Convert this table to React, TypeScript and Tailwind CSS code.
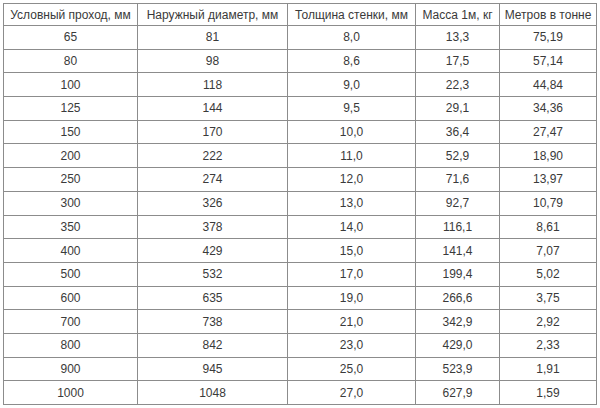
const headers = [
  "Условный проход, мм",
  "Наружный диаметр, мм",
  "Толщина стенки, мм",
  "Масса 1м, кг",
  "Метров в тонне",
];

const rows = [
  ["65", "81", "8,0", "13,3", "75,19"],
  ["80", "98", "8,6", "17,5", "57,14"],
  ["100", "118", "9,0", "22,3", "44,84"],
  ["125", "144", "9,5", "29,1", "34,36"],
  ["150", "170", "10,0", "36,4", "27,47"],
  ["200", "222", "11,0", "52,9", "18,90"],
  ["250", "274", "12,0", "71,6", "13,97"],
  ["300", "326", "13,0", "92,7", "10,79"],
  ["350", "378", "14,0", "116,1", "8,61"],
  ["400", "429", "15,0", "141,4", "7,07"],
  ["500", "532", "17,0", "199,4", "5,02"],
  ["600", "635", "19,0", "266,6", "3,75"],
  ["700", "738", "21,0", "342,9", "2,92"],
  ["800", "842", "23,0", "429,0", "2,33"],
  ["900", "945", "25,0", "523,9", "1,91"],
  ["1000", "1048", "27,0", "627,9", "1,59"],
];

const widths = ["w-[134px]", "w-[150px]", "w-[128px]", "w-[84px]", "w-[97px]"];

export default function App() {
  return (
    <div className="w-[600px] h-[408px] bg-white pt-[3px] pl-[3px] font-['Liberation_Sans',Arial,sans-serif] text-[12px] text-[#3a3a3a]">
      <table className="border-collapse table-fixed w-[593px]">
        <thead>
          <tr className="h-[22px]">
            {headers.map((h, i) => (
              <th
                key={h}
                className={`${widths[i]} border border-[#8c8c8c] font-normal text-center px-1 leading-none`}
              >
                {h}
              </th>
            ))}
          </tr>
        </thead>
        <tbody>
          {rows.map((r) => (
            <tr key={r[0]} className="h-[23.7px]">
              {r.map((c, i) => (
                <td
                  key={i}
                  className="border border-[#8c8c8c] text-center p-0 leading-none"
                >
                  {c}
                </td>
              ))}
            </tr>
          ))}
        </tbody>
      </table>
    </div>
  );
}
